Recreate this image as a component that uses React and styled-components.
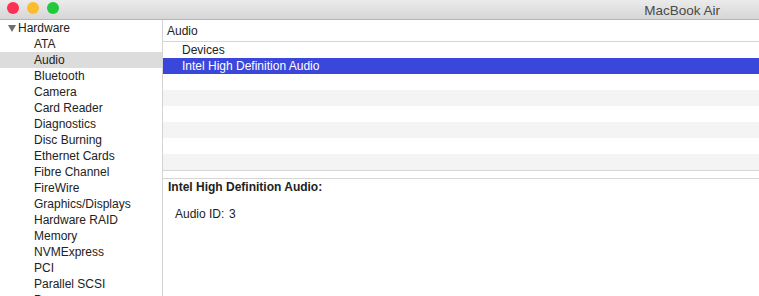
import React from "react";
import styled, { createGlobalStyle } from "styled-components";

const GlobalStyle = createGlobalStyle`
  html, body {
    margin: 0;
    padding: 0;
    background: #ffffff;
    overflow: hidden;
  }
  body {
    font-family: "Liberation Sans", Arial, sans-serif;
    font-size: 12px;
    color: #222;
  }
`;

const Window = styled.div`
  width: 759px;
  height: 296px;
  display: flex;
  flex-direction: column;
  overflow: hidden;
  background: #fff;
`;

const TitleBar = styled.div`
  height: 19px;
  flex: none;
  display: flex;
  align-items: center;
  justify-content: space-between;
  padding: 0 39px 0 7px;
  background: linear-gradient(#ebebeb, #d6d6d6);
  border-bottom: 1px solid #b4b4b4;
`;

const Lights = styled.div`
  display: flex;
  gap: 8px;
  margin-top: -4px;
`;

const Light = styled.span`
  width: 12px;
  height: 12px;
  border-radius: 50%;
  background: ${(p) => p.color};
`;

const Title = styled.div`
  font-size: 13.5px;
  color: #4a4a4a;
  margin-top: 1px;
`;

const Body = styled.div`
  flex: 1;
  display: flex;
  min-height: 0;
`;

const Sidebar = styled.div`
  width: 162px;
  flex: none;
  border-right: 1px solid #d4d4d4;
  overflow: hidden;
`;

const SideRow = styled.div`
  height: 16px;
  line-height: 16px;
  display: flex;
  align-items: center;
  padding-left: ${(p) => (p.group ? "8px" : "34px")};
  background: ${(p) => (p.selected ? "#dcdcdc" : "transparent")};
  white-space: nowrap;
`;

const Disclosure = styled.span`
  width: 0;
  height: 0;
  border-left: 4px solid transparent;
  border-right: 4px solid transparent;
  border-top: 7px solid #6e6e6e;
  margin-right: 2px;
`;

const Main = styled.div`
  flex: 1;
  display: flex;
  flex-direction: column;
  min-width: 0;
`;

const Header = styled.div`
  height: 22px;
  box-sizing: border-box;
  display: flex;
  align-items: center;
  padding: 1px 0 0 4px;
  border-bottom: 1px solid #d6d6d6;
`;

const List = styled.div`
  height: 128px;
  border-bottom: 1px solid #d6d6d6;
  overflow: hidden;
`;

const ListRow = styled.div`
  height: 16px;
  line-height: 16px;
  padding-left: 19px;
  color: ${(p) => (p.selected ? "#fff" : "#222")};
  background: ${(p) => (p.selected ? "#3b46da" : p.striped ? "#f4f4f4" : "#fff")};
`;

const Splitter = styled.div`
  height: 7px;
  border-bottom: 1px solid #d6d6d6;
`;

const Detail = styled.div`
  flex: 1;
  padding: 0 0 0 5px;
`;

const DetailTitle = styled.div`
  font-weight: bold;
  height: 16px;
  line-height: 16px;
`;

const Field = styled.div`
  display: flex;
  margin: 11px 0 0 7px;
  line-height: 16px;
`;

const FieldLabel = styled.span`
  width: 54px;
`;

const sideItems = [
  "ATA",
  "Audio",
  "Bluetooth",
  "Camera",
  "Card Reader",
  "Diagnostics",
  "Disc Burning",
  "Ethernet Cards",
  "Fibre Channel",
  "FireWire",
  "Graphics/Displays",
  "Hardware RAID",
  "Memory",
  "NVMExpress",
  "PCI",
  "Parallel SCSI",
  "Power",
  "Printers",
];

const App = () => {
  const rows = ["Devices", "Intel High Definition Audio", "", "", "", "", "", ""];
  return (
    <>
      <GlobalStyle />
      <Window>
        <TitleBar>
          <Lights>
            <Light color="#fc2f55" />
            <Light color="#fdbb2e" />
            <Light color="#22c93d" />
          </Lights>
          <Title>MacBook Air</Title>
        </TitleBar>
        <Body>
          <Sidebar>
            <SideRow group>
              <Disclosure />
              Hardware
            </SideRow>
            {sideItems.map((item) => (
              <SideRow key={item} selected={item === "Audio"}>
                {item}
              </SideRow>
            ))}
          </Sidebar>
          <Main>
            <Header>Audio</Header>
            <List>
              {rows.map((r, i) => (
                <ListRow key={i} selected={i === 1} striped={i > 1 && i % 2 === 1}>
                  {r}
                </ListRow>
              ))}
            </List>
            <Splitter />
            <Detail>
              <DetailTitle>Intel High Definition Audio:</DetailTitle>
              <Field>
                <FieldLabel>Audio ID:</FieldLabel>
                <span>3</span>
              </Field>
            </Detail>
          </Main>
        </Body>
      </Window>
    </>
  );
};

export default App;
